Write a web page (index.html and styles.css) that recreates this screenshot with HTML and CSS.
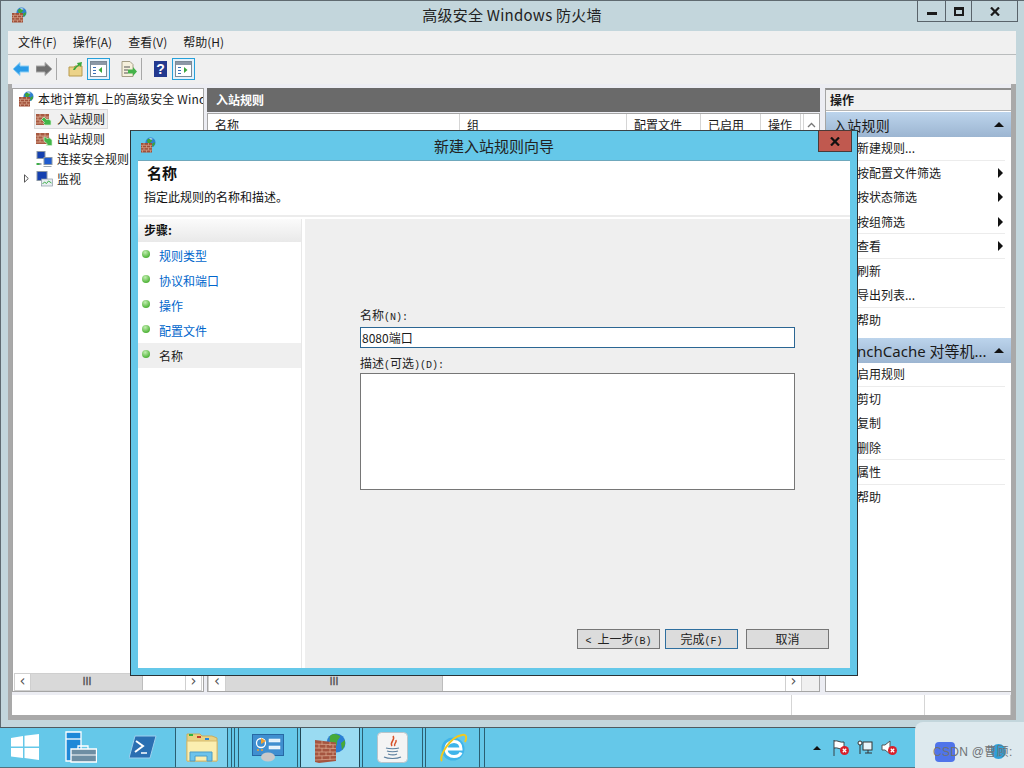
FILE: index.html
```html
<!DOCTYPE html>
<html lang="zh-CN">
<head>
<meta charset="utf-8">
<title>高级安全 Windows 防火墙</title>
<link rel="stylesheet" href="styles.css">
</head>
<body>
<svg class="defs" width="0" height="0">
  <defs>
    <symbol id="globe" viewBox="0 0 16 16">
      <circle cx="10.5" cy="5.5" r="5" fill="#2f7fd0"/>
      <path d="M7 3c2-2 4-1 5 0 0 2-2 2-2 4-2 0-3-2-3-4zM12 7l2.500-2 .5 2-2 3z" fill="#3fa535"/>
      <path d="M9 1.500c1-.6 3-.5 4 .5l-2 .7z" fill="#cfe8fa"/>
    </symbol>
    <symbol id="bricks" viewBox="0 0 16 16">
      <rect x="1" y="6" width="11" height="9.500" fill="#a04f38"/>
      <path d="M1 8.300h11M1 10.700h11M1 13.100h11M4 6v2.300M8.500 6v2.300M2.500 8.300v2.400M6.500 8.300v2.400M10.500 8.300v2.400M4 10.700v2.400M8.500 10.700v2.400M2.500 13.100v2.400M6.500 13.100v2.400M10.500 13.100v2.400" stroke="#d9a58c" stroke-width=".7" fill="none"/>
    </symbol>
    <symbol id="firewall" viewBox="0 0 16 16">
      <use href="#globe" width="16" height="16"/>
      <use href="#bricks" width="16" height="16"/>
    </symbol>
    <symbol id="rule-in" viewBox="0 0 17 14">
      <path d="M0 2h13v11H0z" fill="#a85a42"/>
      <path d="M0 5h13M0 8h13M0 11h13M4 2v3M9 2v3M2 5v3M7 5v3M11 5v3M4 8v3M9 8v3" stroke="#dcae98" stroke-width=".8" fill="none"/>
      <path d="M15 13H9l-1.500-1.500 1-1-3-3L8 5l3 3 1-1 3 1.500z" fill="#43b649" stroke="#d6f2d2" stroke-width=".7"/>
    </symbol>
    <symbol id="rule-out" viewBox="0 0 17 14">
      <path d="M0 1h13v11H0z" fill="#a85a42"/>
      <path d="M0 4h13M0 7h13M0 10h13M4 1v3M9 1v3M2 4v3M7 4v3M11 4v3M4 7v3M9 7v3" stroke="#dcae98" stroke-width=".8" fill="none"/>
      <path d="M8 5h1.500l2 2 1.500-1.500L16 8v5.500h-6L11.500 12l-3.500-3z" fill="#43b649" stroke="#d6f2d2" stroke-width=".7"/>
    </symbol>
    <symbol id="monitors" viewBox="0 0 16 16">
      <rect x="0" y="0" width="9" height="8" fill="#8a97a6"/><rect x="1" y="1" width="7" height="6" fill="#1440b0"/>
      <rect x="7" y="6" width="9" height="8" fill="#8a97a6"/><rect x="8" y="7" width="7" height="6" fill="#1f5cd0"/>
      <path d="M1 12h4v2H1zM7 15h8v1H7z" fill="#9aa6b0"/><path d="M0 12h3v2H0z" fill="#3fae49"/>
    </symbol>
    <symbol id="monitor-chart" viewBox="0 0 16 16">
      <rect x="0" y="0" width="11" height="10" fill="#8a97a6"/><rect x="1" y="1" width="9" height="8" fill="#1440b0"/>
      <rect x="5" y="8" width="11" height="7" fill="#e8eef2" stroke="#8a97a6" stroke-width=".7"/>
      <path d="M6 13l2-2 2 1.500 2-2.500 3 2" fill="none" stroke="#3fae49"/>
    </symbol>
    <symbol id="pane-icon" viewBox="0 0 17 16">
      <rect x=".5" y=".5" width="16" height="15" fill="#fff" stroke="#7c8a96"/>
      <rect x="1" y="1" width="15" height="3" fill="#8c98a6"/>
      <path d="M3 6h3v1H3zM3 9h3v1H3zM3 12h3v1H3z" fill="#3a70b8"/>
    </symbol>
    <symbol id="red-x" viewBox="0 0 9 9">
      <circle cx="4.500" cy="4.500" r="4.500" fill="#d8202a"/>
      <path d="M2.800 2.800l3.400 3.400M6.200 2.800L2.800 6.200" stroke="#fff" stroke-width="1.300"/>
    </symbol>
  </defs>
</svg>

<div class="window">
  <header class="titlebar">
    <svg class="title-icon"><use href="#firewall"/></svg>
    <div class="title-text">高级安全 Windows 防火墙</div>
    <div class="win-controls">
      <div class="ctl ctl-min"><span class="min-glyph"></span></div>
      <div class="ctl ctl-max"><span class="max-glyph"></span></div>
      <div class="ctl ctl-close">
        <svg width="10" height="9" viewBox="0 0 10 9"><path d="M1 .5l8 8M9 .5l-8 8" stroke="#1b1b1b" stroke-width="2.200"/></svg>
      </div>
    </div>
  </header>

  <div class="client">
    <nav class="menubar">
      <span>文件(F)</span><span>操作(A)</span><span>查看(V)</span><span>帮助(H)</span>
    </nav>
    <div class="toolbar">
      <svg class="tb-arrow" viewBox="0 0 16 14"><path d="M0 7l7-6.500V4h9v6H7v3.500z" fill="#2b9be8" stroke="#8fd0f5"/></svg>
      <svg class="tb-arrow tb-fwd" viewBox="0 0 16 14"><path d="M16 7L9 .5V4H0v6h9v3.500z" fill="#6e6e6e" stroke="#aaa"/></svg>
      <span class="tb-sep"></span>
      <svg class="tb-folder" viewBox="0 0 15 16"><path d="M1 6h5l1-1h7v10H1z" fill="#ecd389" stroke="#b89a4e"/><path d="M5 9c1-3 3-4 5-5L9 2l5-1-1 5-1.500-1.500C9 6 8 7 7 9z" fill="#3aa63c"/></svg>
      <div class="tb-toggle"><svg viewBox="0 0 17 16"><use href="#pane-icon"/><path d="M12 6v6L8.500 9z" fill="#3aa63c"/></svg></div>
      <svg class="tb-doc" viewBox="0 0 16 16"><path d="M1 .5h8l3 3v12H1z" fill="#f6f1dc" stroke="#a59f86"/><path d="M3 6h6M3 9h4M3 12h4" stroke="#555"/><path d="M7 8.500h5V6l4 4.500-4 4.500v-2.500H7z" fill="#45b34a"/></svg>
      <span class="tb-sep tb-sep-2"></span>
      <svg class="tb-help" viewBox="0 0 13 16"><rect width="13" height="16" fill="#23398f"/><text x="6.500" y="13" text-anchor="middle" class="help-q">?</text></svg>
      <div class="tb-toggle tb-toggle-2"><svg viewBox="0 0 17 16"><use href="#pane-icon"/><path d="M9 6v6l3.500-3z" fill="#3aa63c"/></svg></div>
    </div>

    <div class="mmc">
      <div class="panes">
        <aside class="pane tree">
          <div class="tree-body">
            <div class="tree-row tree-root"><svg class="ic16"><use href="#firewall"/></svg><span>本地计算机 上的高级安全 Windows</span></div>
            <div class="tree-row tree-child tree-selected"><svg class="ic-rule"><use href="#rule-in"/></svg><span>入站规则</span></div>
            <div class="tree-row tree-child"><svg class="ic-rule"><use href="#rule-out"/></svg><span>出站规则</span></div>
            <div class="tree-row tree-child"><svg class="ic-mon"><use href="#monitors"/></svg><span>连接安全规则</span></div>
            <div class="tree-row tree-child">
              <svg class="expander" viewBox="0 0 5 9"><path d="M.5.8v7.400L4.300 4.500z" fill="#fff" stroke="#444" stroke-width=".9"/></svg>
              <svg class="ic-mon"><use href="#monitor-chart"/></svg><span>监视</span>
            </div>
          </div>
          <div class="hscroll">
            <span class="sb-btn">‹</span><span class="sb-thumb thumb-tree">Ⅲ</span><span class="sb-track"></span><span class="sb-btn">›</span>
          </div>
        </aside>

        <section class="pane-list">
          <div class="list-head">入站规则</div>
          <div class="list-box">
            <div class="list-cols">
              <span class="col c1">名称</span><span class="col c2">组</span><span class="col c3">配置文件</span><span class="col c4">已启用</span><span class="col c5">操作</span>
              <span class="sb-up"><svg width="9" height="6" viewBox="0 0 9 6"><path d="M1 5l3.500-3.500L8 5" fill="none" stroke="#777" stroke-width="1.300"/></svg></span>
            </div>
            <div class="list-rows"></div>
            <div class="list-bottom">
              <div class="hscroll hscroll-list">
                <span class="sb-btn sb-btn-wide">‹</span><span class="sb-thumb thumb-list">Ⅲ</span><span class="sb-track"></span><span class="sb-btn">›</span>
              </div>
              <span class="corner"></span>
            </div>
          </div>
        </section>

        <aside class="pane actions">
          <div class="act-title">操作</div>
          <div class="act-head"><span>入站规则</span><i class="tri-up"></i></div>
          <ul class="act-list">
            <li class="sep">新建规则...</li>
            <li>按配置文件筛选<i class="tri-right"></i></li>
            <li>按状态筛选<i class="tri-right"></i></li>
            <li class="sep">按组筛选<i class="tri-right"></i></li>
            <li class="sep">查看<i class="tri-right"></i></li>
            <li>刷新</li>
            <li class="sep">导出列表...</li>
            <li>帮助</li>
          </ul>
          <div class="act-head act-head-2"><span>BranchCache 对等机...</span><i class="tri-up"></i></div>
          <ul class="act-list">
            <li class="sep">启用规则</li>
            <li>剪切</li>
            <li>复制</li>
            <li class="sep">删除</li>
            <li class="sep">属性</li>
            <li>帮助</li>
          </ul>
        </aside>
      </div>
      <footer class="statusbar"><span class="st st1"></span><span class="st st2"></span><span class="st st3"></span></footer>
    </div>
  </div>
</div>

<div class="taskbar">
  <svg class="tk-start" viewBox="0 0 28 26"><path d="M0 4l12-2v10.500H0zM13.500 1.800L28 0v12.500H13.500zM0 14h12v10L0 22.500zM13.500 14H28v12l-14.500-2z" fill="#fff"/></svg>
  <svg class="tk-server" viewBox="0 0 32 32">
    <path d="M1 1h15v29H1z" fill="#1e88d8" stroke="#fff" stroke-width="1.300"/><path d="M1 8h15" stroke="#fff" stroke-width="1.300"/>
    <path d="M6 18h25.500v13H6z" fill="#6e8ea3" stroke="#fff" stroke-width="1.300"/><path d="M13 18v-3h10v3" fill="none" stroke="#fff" stroke-width="1.300"/><path d="M6 24h25" stroke="#fff"/>
  </svg>
  <svg class="tk-ps" viewBox="0 0 28 24"><path d="M6 1h21l-6 22H0z" fill="#2a6fb2" stroke="#9ed0ee"/><path d="M7 6l7 5-8 6" fill="none" stroke="#fff" stroke-width="2"/><path d="M12 18h6" stroke="#fff" stroke-width="1.500"/></svg>
  <div class="tile tile-folder">
    <svg viewBox="0 0 32 30" width="32" height="30">
      <path d="M1 4l0-3h13l2 2h10l5 2v23H1z" fill="#e9d283" stroke="#c9ad5f"/>
      <path d="M3 1h4v2H3z" fill="#33b33b"/><path d="M11 3h4v2h-4z" fill="#c63c2c"/><path d="M19 5h4v2h-4z" fill="#2a86d8"/>
      <path d="M1 8h30v20H1z" fill="#fbeeb0" stroke="#d6bb6e"/>
      <path d="M4 28v-9h22v9h-5v-5H9v5z" fill="#6cc3ec" stroke="#4c9cc6"/>
    </svg>
  </div>
  <span class="tile-edge"></span><span class="tile-edge tile-edge-b"></span>
  <div class="tile tile-cp">
    <svg viewBox="0 0 32 28" width="32" height="28">
      <rect x=".5" y=".5" width="31" height="21" fill="#3f8fd0" stroke="#2768a4"/>
      <circle cx="9" cy="9" r="4.500" fill="none" stroke="#fff" stroke-width="1.300"/><path d="M9 4l5 3-5 3z" fill="#f0a030"/>
      <rect x="17" y="5" width="11" height="3" fill="#dff0fb" stroke="#fff" stroke-width=".5"/><rect x="17" y="12" width="11" height="3" fill="#dff0fb" stroke="#fff" stroke-width=".5"/>
      <circle cx="6" cy="16" r="1" fill="#f0a030"/><circle cx="10" cy="16" r="1" fill="#f0a030"/>
      <ellipse cx="16" cy="23" rx="7" ry="4.500" fill="#c9c9c9"/>
    </svg>
  </div>
  <div class="tile tile-fw">
    <svg viewBox="0 0 32 30" width="32" height="30">
      <circle cx="22" cy="10" r="9.500" fill="#2b7fd4"/>
      <path d="M16 3c3-3 7-2 10 0 0 3-3 3-3 7 0 3-2 4-3 7-3-3-5-9-4-14zM27 10l4-3 0 5-3 5z" fill="#46a938"/>
      <path d="M1 7l21 2.500V28L5 30l-4-1z" fill="#a55540"/>
      <path d="M1 11l21 .8M1 15l21 .5M1 19l21 0M1 23l21-.5M1 27l21-1M8 8v4M16 9v4M5 11v4M12 12v4M19 12v4M8 15v4M16 16v4M5 19v4M12 19v4M19 19v4M8 23v4M16 23v4" stroke="#d8a48c" stroke-width=".8" fill="none"/>
    </svg>
  </div>
  <div class="tile tile-java">
    <svg viewBox="0 0 31 31" width="31" height="31">
      <rect x=".5" y=".5" width="30" height="30" rx="4" fill="#f4f4f4" stroke="#b8c4ca"/>
      <path d="M16 4c3 4-4 6-1 10M19 8c1 3-3 4-1 6" fill="none" stroke="#d8522a" stroke-width="1.500"/>
      <path d="M9 16c3 1 10 1 13 0M10 19c2 1 9 1 11 0M11 22c3 1 7 1 9 0M7 25c4 2 13 2 17 0" fill="none" stroke="#5c7f9e" stroke-width="1.200"/>
    </svg>
  </div>
  <div class="tile tile-ie">
    <svg viewBox="0 0 30 30" width="30" height="30">
      <circle cx="15" cy="16" r="11.500" fill="#3fb4ea"/>
      <path d="M8 16h15c0-5-3-7.500-7-7.500S8 11 8 16c0 5 4 7.500 8 7.500 3 0 6-1 7-4" fill="none" stroke="#fff" stroke-width="3"/>
      <path d="M4 28C0 24 12 4 24 2c5-1 5 3 3 7" fill="none" stroke="#f2c91e" stroke-width="2"/>
    </svg>
  </div>
  <span class="tile-edge tile-edge-c"></span>
  <div class="tray">
    <i class="tray-up"></i>
    <span class="tray-icon">
      <svg viewBox="0 0 16 16" width="16" height="16"><path d="M1 0v16M1 1c4-1 6 2 10 1v7c-4 1-6-2-10-1" fill="#fff" stroke="#333" stroke-width=".9"/></svg>
      <svg class="tray-x"><use href="#red-x"/></svg>
    </span>
    <span class="tray-icon">
      <svg viewBox="0 0 16 16" width="16" height="16"><rect x="6" y="2" width="9" height="8" fill="#e8f6fb" stroke="#333"/><rect x="1" y="1" width="4" height="4" rx="2" fill="#fff" stroke="#333"/><path d="M3 5v9M8 13h7M11 10v3" stroke="#333" fill="none"/></svg>
    </span>
    <span class="tray-icon">
      <svg viewBox="0 0 16 16" width="16" height="16"><path d="M1 5h3l5-4v13l-5-4H1z" fill="#fff" stroke="#555"/></svg>
      <svg class="tray-x"><use href="#red-x"/></svg>
    </span>
  </div>
</div>

<div class="watermark">
  <span class="wm-logo"></span><span class="wm-blob"></span>
  <span class="wm-text">CSDN @曹顾:</span>
</div>

<div class="dialog">
  <div class="dlg-title">
    <svg class="title-icon"><use href="#firewall"/></svg>
    <div class="dlg-title-text">新建入站规则向导</div>
    <div class="dlg-close"><svg width="10" height="9" viewBox="0 0 10 9"><path d="M1 .5l8 8M9 .5l-8 8" stroke="#111" stroke-width="2.200"/></svg></div>
  </div>
  <div class="dlg-body">
    <div class="dlg-header">
      <h1>名称</h1>
      <p>指定此规则的名称和描述。</p>
    </div>
    <div class="dlg-main">
      <div class="steps">
        <div class="steps-head">步骤:</div>
        <div class="step"><i></i><a>规则类型</a></div>
        <div class="step"><i></i><a>协议和端口</a></div>
        <div class="step"><i></i><a>操作</a></div>
        <div class="step"><i></i><a>配置文件</a></div>
        <div class="step step-current"><i></i><span>名称</span></div>
      </div>
      <div class="form">
        <div class="fields">
          <label>名称<span class="lat">(N):</span></label>
          <div class="input">8080端口</div>
          <label>描述<span class="lat">(</span>可选<span class="lat">)(D):</span></label>
          <div class="textarea"></div>
        </div>
        <div class="buttons">
          <div class="btn btn-back"><span class="lat">&lt; </span>上一步<span class="lat">(B)</span></div>
          <div class="btn btn-finish">完成<span class="lat">(F)</span></div>
          <div class="btn btn-cancel">取消</div>
        </div>
      </div>
    </div>
  </div>
</div>
</body>
</html>
```

FILE: styles.css
```css
* { box-sizing: border-box; }
html, body { margin: 0; padding: 0; }
body {
  width: 1024px;
  height: 768px;
  overflow: hidden;
  position: relative;
  display: flex;
  flex-direction: column;
  background: #c3d6dc;
  color: #1a1a1a;
  font: 12px/16px "Noto Sans CJK SC", "Noto Sans", sans-serif;
}
.defs { position: absolute; }
ul { list-style: none; margin: 0; padding: 0; }
i { display: block; font-style: normal; }

/* main window */
.window {
  height: 727px;
  flex: none;
  background: #c3d6dc;
  border-top: 1px solid #5f6a70;
  border-left: 1px solid #5f6a70;
  display: flex;
  flex-direction: column;
}
.titlebar {
  height: 30px;
  flex: none;
  position: relative;
  display: flex;
  justify-content: center;
  padding-top: 5px;
}
.title-icon { position: absolute; left: 10px; top: 6px; width: 16px; height: 16px; }
.title-text { font-size: 15px; line-height: 18px; color: #222; letter-spacing: .25px; margin-left: -1px; }
.win-controls {
  position: absolute;
  left: 916px;
  top: -1px;
  width: 101px;
  height: 22px;
  display: flex;
  border: 1px solid #59636a;
}
.ctl { display: flex; align-items: center; justify-content: center; border-right: 1px solid #59636a; }
.ctl-min { width: 28px; }
.ctl-max { width: 26px; }
.ctl-close { flex: 1; border-right: 0; }
.min-glyph { width: 10px; height: 3px; background: #1b1b1b; margin-top: 5px; }
.max-glyph { width: 10px; height: 9px; border: 2px solid #1b1b1b; border-top-width: 3px; }

.client {
  margin-left: 7px;
  width: 1008px;
  height: 689px;
  display: flex;
  flex-direction: column;
  background: #f0f0f0;
}
.menubar {
  height: 24px;
  flex: none;
  display: flex;
  gap: 16px;
  padding: 2px 0 0 10px;
  border-bottom: 1px solid #b9bcbd;
  line-height: 17px;
}
.toolbar {
  height: 29px;
  flex: none;
  display: flex;
  align-items: center;
  padding: 0 0 1px 5px;
}
.tb-arrow { width: 16px; height: 14px; }
.tb-fwd { margin-left: 7px; }
.tb-sep { width: 1px; height: 22px; background: #a8a8a8; margin-left: 4px; }
.tb-sep-2 { margin-left: 4px; }
.tb-folder { width: 15px; height: 16px; margin-left: 11px; }
.tb-toggle {
  width: 23px;
  height: 22px;
  margin-left: 4px;
  border: 1px solid #26a0da;
  background: #e5f1fa;
  display: flex;
  align-items: center;
  justify-content: center;
}
.tb-toggle svg { width: 17px; height: 16px; }
.tb-toggle-2 { margin-left: 5px; }
.tb-doc { width: 16px; height: 16px; margin-left: 11px; }
.tb-help { width: 13px; height: 16px; margin-left: 12px; }
.help-q { font: bold 14px "Liberation Sans", sans-serif; fill: #fff; }

.mmc {
  flex: 1;
  min-height: 0;
  background: #a9a9a9;
  padding: 0 5px 5px 4px;
  display: flex;
  flex-direction: column;
}
.panes {
  height: 611px;
  flex: none;
  display: grid;
  grid-template-columns: 192px 613px 188px;
  column-gap: 3px;
  padding: 4px 0 3px;
  background: #ecedf3;
  justify-content: start;
}
.pane { background: #fff; border: 1px solid #a5a5a5; min-height: 0; }
.actions { margin-left: 2px; border-right: 0; border-top: 2px solid #8f8f8f; border-left: 1px solid #a5a5a5; }

/* tree */
.tree { display: flex; flex-direction: column; }
.tree-body { flex: 1; overflow: hidden; }
.tree-row {
  height: 20px;
  display: flex;
  align-items: center;
  white-space: nowrap;
  color: #1a1a1a;
}
.tree-root { padding-left: 5px; gap: 4px; letter-spacing: .15px; }
.tree-child { padding-left: 23px; gap: 4px; position: relative; }
.tree-selected {
  background: #f0f0f0;
  box-shadow: inset 0 0 0 1px #dadada;
  margin-left: 21px;
  padding-left: 2px;
  width: 74px;
}
.ic16 { width: 16px; height: 16px; flex: none; }
.ic-mon { width: 17px; height: 16px; flex: none; }
.ic-rule { width: 17px; height: 14px; flex: none; }
.expander { position: absolute; left: 11px; top: 5px; width: 5px; height: 9px; }

/* scrollbars */
.hscroll {
  height: 18px;
  flex: none;
  display: flex;
  background: #fff;
  border-top: 1px solid #cfcfcf;
  border-bottom: 1px solid #cfcfcf;
  margin: 0 1px;
  color: #555;
}
.sb-btn {
  width: 17px;
  flex: none;
  text-align: center;
  font: 15px/14px "DejaVu Sans", sans-serif;
  border-left: 1px solid #cfcfcf;
  border-right: 1px solid #cfcfcf;
}
.sb-btn-wide { width: 18px; }
.sb-thumb {
  flex: none;
  background: #d9d9d9;
  border-right: 1px solid #bdbdbd;
  text-align: center;
  font: bold 10px/16px "Liberation Sans", sans-serif;
  color: #555;
}
.thumb-tree { width: 112px; }
.thumb-list { width: 217px; }
.sb-track { flex: 1; }

/* list */
.pane-list { display: flex; flex-direction: column; width: 613px; }
.list-head {
  height: 24px;
  flex: none;
  background: #6a6a6a;
  color: #fff;
  font-weight: 700;
  padding-left: 9px;
  line-height: 24px;
}
.list-box {
  flex: 1;
  min-height: 0;
  margin-top: 1px;
  background: #fff;
  border: 1px solid #a5a5a5;
  display: flex;
  flex-direction: column;
}
.list-cols { height: 22px; flex: none; display: flex; border-bottom: 1px solid #d5d5d5; }
.col { padding: 3px 0 0 7px; border-right: 1px solid #d5d5d5; line-height: 16px; }
.c1 { width: 252px; }
.c2 { width: 167px; }
.c3 { width: 74px; }
.c4 { width: 60px; }
.c5 { width: 40px; }
.sb-up {
  width: 16px;
  margin-left: auto;
  display: flex;
  align-items: center;
  justify-content: center;
  border-left: 1px solid #d5d5d5;
}
.list-rows { flex: 1; }
.list-bottom { display: flex; height: 18px; flex: none; background: #f0f0f0; }
.hscroll-list { width: 594px; margin: 0; border-bottom: 0; }
.corner { flex: 1; }

/* actions */
.act-title {
  height: 21px;
  background: #f0f0f0;
  border-bottom: 1px solid #b5b5b5;
  font-weight: 700;
  padding-left: 4px;
  line-height: 20px;
}
.act-head {
  height: 25px;
  margin-top: 1px;
  background: linear-gradient(#bcd4ec, #9cb5d1);
  display: flex;
  align-items: center;
  justify-content: space-between;
  font-size: 14px;
  padding: 0 7px 0 7px;
  white-space: nowrap;
  letter-spacing: .25px;
  position: relative;
}
.act-head-2 { margin-top: 6px; }
.act-head-2 span { font-family: "Noto Sans", "Noto Sans CJK SC", sans-serif; font-size: 15px; letter-spacing: 0; }
.act-list { margin-top: -1px; }
.act-list li {
  height: 24.500px;
  display: flex;
  align-items: center;
  justify-content: space-between;
  padding: 0 8px 0 31px;
  position: relative;
  line-height: 16px;
}
.act-list li.sep::after {
  content: "";
  position: absolute;
  left: 31px;
  right: 6px;
  bottom: 0;
  height: 1px;
  background: #ececec;
}
.tri-up {
  width: 0;
  height: 0;
  border-left: 5px solid transparent;
  border-right: 5px solid transparent;
  border-bottom: 5px solid #111;
}
.tri-right {
  width: 0;
  height: 0;
  border-left: 5px solid #111;
  border-top: 5px solid transparent;
  border-bottom: 5px solid transparent;
}

/* status */
.statusbar { height: 20px; flex: none; display: flex; background: #fff; border-right: 1px solid #d0d0d0; }
.st { border-right: 1px solid #d5d5d5; }
.st1 { width: 780px; }
.st2 { width: 133px; }
.st3 { flex: 1; border-right: 0; }

/* taskbar */
.taskbar {
  height: 41px;
  flex: none;
  background: #65c8e9;
  border-top: 1px solid #4f5a60;
  border-bottom: 1px solid #52727f;
  display: flex;
  position: relative;
}
.tk-start { width: 28px; height: 26px; margin: 6px 0 0 11px; flex: none; }
.tk-server { width: 32px; height: 32px; margin: 3px 0 0 26px; flex: none; }
.tk-ps { width: 28px; height: 24px; margin: 7px 0 0 32px; flex: none; }
.tile {
  flex: none;
  border: 1px solid #2b5f72;
  border-top: 0;
  border-bottom: 0;
  display: flex;
  align-items: center;
  justify-content: center;
}
.tile-folder { width: 53px; margin-left: 18px; background: #7fd1ee; }
.tile-edge { width: 4px; flex: none; border-right: 1px solid #2b5f72; }
.tile-edge-b { width: 3px; margin-right: 3px; }
.tile-edge-c { width: 5px; }
.tile-cp { width: 60px; background: #68c9ea; }
.tile-fw { width: 60px; margin-left: 2px; background: #9adbf2; border-color: #1f4655; border-width: 0 1px; }
.tile-java { width: 61px; margin-left: 2px; }
.tile-ie { width: 55px; margin-left: 2px; }
.tray {
  position: absolute;
  left: 813px;
  top: 12px;
  display: flex;
  align-items: center;
  gap: 6px;
}
.tray-up {
  width: 0;
  height: 0;
  border-left: 4px solid transparent;
  border-right: 4px solid transparent;
  border-bottom: 4px solid #111;
  margin-right: 6px;
}
.tray-icon { width: 18px; height: 16px; position: relative; display: block; }
.tray-icon svg { display: block; }
.tray-x { position: absolute; left: 7px; top: 6px; width: 9px; height: 9px; }

.watermark {
  position: absolute;
  left: 915px;
  top: 722px;
  width: 109px;
  height: 46px;
  background: #dde9ee;
  border-top-left-radius: 8px;
}
.wm-logo { position: absolute; left: 20px; top: 20px; width: 20px; height: 20px; border-radius: 4px; background: #4f74ea; }
.wm-blob { position: absolute; left: 76px; top: 22px; width: 15px; height: 15px; border-radius: 50%; background: #2f9fd8; }
.wm-text {
  position: absolute;
  left: 18px;
  top: 21px;
  font: 12px/18px "Liberation Sans", "Noto Sans CJK SC", sans-serif;
  letter-spacing: .3px;
  color: #6f7376;
  white-space: nowrap;
}

/* dialog */
.dialog {
  position: absolute;
  left: 130px;
  top: 130px;
  width: 728px;
  height: 546px;
  background: #65c8e9;
  border: 1px solid #2a3236;
  border-top-color: #3a4246;
  display: flex;
  flex-direction: column;
  padding: 0 7px 7px;
}
.dlg-title { height: 29px; flex: none; position: relative; display: flex; justify-content: center; padding-top: 6px; }
.dlg-title .title-icon { left: 2px; top: 6px; }
.dlg-title-text { font-size: 15px; line-height: 18px; color: #222; }
.dlg-close {
  position: absolute;
  right: -2px;
  top: -1px;
  width: 34px;
  height: 22px;
  background: #c0594f;
  border: 1px solid #4a3a38;
  display: flex;
  align-items: center;
  justify-content: center;
}
.dlg-body { flex: 1; min-height: 0; background: #fff; display: flex; flex-direction: column; border-top: 1px solid #6fa8bc; }
.dlg-header { height: 56px; flex: none; border-bottom: 2px solid #ececec; padding: 2px 0 0 6px; }
.dlg-header h1 { margin: 0 0 0 3px; font-size: 15px; line-height: 20px; font-weight: 700; color: #111; }
.dlg-header p { margin: 6px 0 0; line-height: 16px; color: #111; }
.dlg-main { flex: 1; min-height: 0; display: flex; padding-top: 2px; }
.steps { width: 164px; flex: none; border-right: 1px solid #e8e8e8; }
.steps-head {
  height: 23px;
  margin-bottom: 1px;
  background: linear-gradient(#fbfbfb, #e9e9e9);
  font-weight: 700;
  padding-left: 6px;
  line-height: 22px;
  color: #111;
}
.step { height: 25px; display: flex; align-items: center; padding-left: 4px; }
.step i {
  width: 8px;
  height: 8px;
  border-radius: 50%;
  background: radial-gradient(circle at 40% 30%, #c2eeb0, #53b53c 70%);
  margin: -4px 9px 0 0;
}
.step a { color: #0066cc; }
.step-current { background: #efefef; }
.form {
  flex: 1;
  margin-left: 3px;
  background: #efefef;
  display: flex;
  flex-direction: column;
  justify-content: space-between;
  padding: 88px 21px 19px 55px;
}
.fields { margin-right: 34px; }
.fields label { display: block; height: 16px; line-height: 16px; color: #222; }
.lat { font: 10px/16px "Liberation Mono", monospace; }
.input {
  height: 21px;
  margin: 4px 0 7px;
  background: #fff;
  border: 1px solid #2b6693;
  padding-left: 1px;
  line-height: 19px;
}
.textarea { height: 117px; margin-top: 2px; background: #fff; border: 1px solid #767676; }
.buttons { display: flex; justify-content: flex-end; }
.btn {
  height: 20px;
  background: #dcdcdc;
  border: 1px solid #767676;
  text-align: center;
  line-height: 18px;
  color: #222;
}
.btn-back { width: 83px; }
.btn-finish { width: 73px; margin-left: 5px; border-color: #2f6f9f; }
.btn-cancel { width: 83px; margin-left: 8px; }
```
